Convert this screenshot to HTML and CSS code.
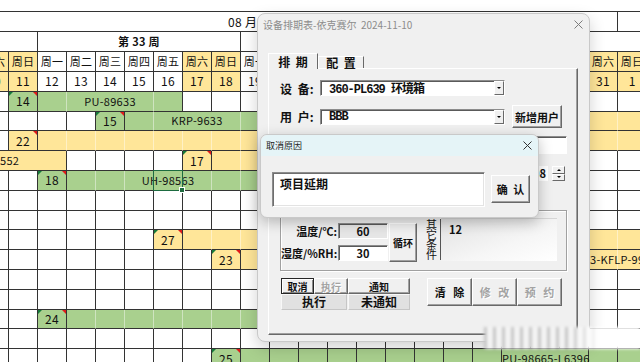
FILE: index.html
```html
<!DOCTYPE html>
<html lang="zh-CN">
<head>
    <meta charset="UTF-8">
    <meta name="viewport" content="width=device-width, initial-scale=1.0">
    <title>设备排期表</title>
    <link rel="stylesheet" href="styles.css">
</head>
<body>

    <table class="sheet">
        <colgroup><col span="23"></colgroup>
        <tr class="month-row"><td colspan="22" class="month">08 月</td><td></td></tr>
        <tr class="head-row"><td colspan="2"></td><td colspan="7" class="week">第 33 周</td><td colspan="7" class="week">第 34 周</td><td colspan="7" class="week">第 35 周</td></tr>
        <tr class="head-row days">
            <td class="we">周六</td><td class="we">周日</td><td>周一</td><td>周二</td><td>周三</td><td>周四</td><td>周五</td>
            <td class="we">周六</td><td class="we">周日</td><td>周一</td><td>周二</td><td>周三</td><td>周四</td><td>周五</td>
            <td class="we">周六</td><td class="we">周日</td><td>周一</td><td>周二</td><td>周三</td><td>周四</td><td>周五</td>
            <td class="we">周六</td><td class="we">周日</td>
        </tr>
        <tr class="dates">
            <td class="we">10</td><td class="we">11</td><td>12</td><td>13</td><td>14</td><td>15</td><td>16</td>
            <td class="we">17</td><td class="we">18</td><td>19</td><td>20</td><td>21</td><td>22</td><td>23</td>
            <td class="we">24</td><td class="we">25</td><td>26</td><td>27</td><td>28</td><td>29</td><td>30</td>
            <td class="we">31</td><td class="we">1</td>
        </tr>

        <!-- bookings -->
        <tr>
            <td></td><td class="g n">14</td><td class="g"></td><td class="g" colspan="3">PU-89633</td><td class="g e"></td><td></td><td></td>
            <td></td><td></td><td></td><td></td><td></td><td></td><td></td><td></td><td></td><td></td><td></td><td></td><td></td><td></td>
        </tr>
        <tr>
            <td></td><td></td><td></td><td></td><td class="g n">15</td><td class="g"></td><td class="g" colspan="3">KRP-9633</td><td class="g"></td><td class="g e"></td>
            <td></td><td></td><td></td><td></td><td></td><td></td><td class="y"></td><td class="y"></td><td class="y"></td><td class="y"></td><td class="y"></td><td class="y"></td>
        </tr>
        <tr>
            <td></td><td class="y n r">22</td><td class="y"></td><td class="y"></td><td class="y"></td><td class="y"></td><td class="y"></td><td class="y"></td><td class="y"></td>
            <td class="y"></td><td class="y"></td><td class="y"></td><td class="y"></td><td class="y"></td><td class="y"></td><td class="y"></td><td class="y"></td><td class="y"></td><td class="y"></td><td class="y"></td><td class="y"></td><td class="y"></td><td class="y"></td>
        </tr>
        <tr>
            <td class="y e tail" colspan="3">552</td><td></td><td></td><td></td><td></td><td class="y n">17</td><td class="y"></td><td class="y"></td><td class="y"></td><td class="y"></td><td class="y e"></td>
            <td></td><td></td><td></td><td></td><td></td><td></td><td></td><td></td><td></td><td></td>
        </tr>
        <tr>
            <td></td><td></td><td class="g n">18</td><td class="g"></td><td class="g"></td><td class="g"></td>
            <td class="g sel"><div class="spill">UH-98563</div><span class="cursor"></span></td>
            <td class="g"></td><td class="g"></td><td class="g"></td><td class="g"></td><td class="g e"></td>
            <td></td><td></td><td></td><td></td><td></td><td></td><td></td><td></td><td></td><td></td><td></td>
        </tr>
        <tr>
            <td></td><td></td><td></td><td></td><td></td><td></td><td></td><td></td><td></td><td></td><td></td><td></td>
            <td></td><td></td><td></td><td></td><td></td><td></td><td></td><td></td><td></td><td></td><td></td>
        </tr>
        <tr>
            <td></td><td></td><td></td><td></td><td></td><td></td><td></td><td></td><td></td><td></td><td></td><td></td>
            <td></td><td></td><td></td><td></td><td></td><td></td><td></td><td></td><td></td><td></td><td></td>
        </tr>
        <tr>
            <td></td><td></td><td></td><td></td><td></td><td></td><td class="y n">27</td><td class="y"></td><td class="y"></td><td class="y"></td><td class="y"></td><td class="y"></td>
            <td class="y"></td><td class="y"></td><td class="y"></td><td class="y"></td><td class="y"></td><td class="y"></td><td class="y"></td><td class="y"></td><td class="y"></td><td class="y"></td><td class="y"></td>
        </tr>
        <tr>
            <td></td><td></td><td></td><td></td><td></td><td></td><td></td><td></td><td class="y n">23</td><td class="y"></td><td class="y"></td><td class="y"></td>
            <td class="y"></td><td class="y"></td><td class="y"></td><td class="y"></td><td class="y"></td><td class="y"></td><td class="y"></td><td class="y"></td><td class="y"></td><td class="y cut">3-KFLP-9963</td><td class="y"></td>
        </tr>
        <tr>
            <td></td><td></td><td></td><td></td><td></td><td></td><td></td><td></td><td></td><td></td><td></td><td></td>
            <td></td><td></td><td></td><td></td><td></td><td></td><td></td><td></td><td></td><td></td><td></td>
        </tr>
        <tr>
            <td></td><td></td><td></td><td></td><td></td><td></td><td></td><td></td><td></td><td></td><td></td><td></td>
            <td></td><td></td><td></td><td></td><td></td><td></td><td></td><td></td><td></td><td></td><td></td>
        </tr>
        <tr>
            <td></td><td></td><td class="g n">24</td><td class="g"></td><td class="g"></td><td class="g"></td><td class="g"></td><td class="g"></td><td class="g"></td><td class="g"></td>
            <td class="g"></td><td class="g"></td><td class="g"></td><td class="g"></td><td class="g"></td><td class="g"></td><td class="g e"></td><td></td><td></td><td></td><td></td><td></td><td></td>
        </tr>
        <tr>
            <td></td><td></td><td></td><td></td><td></td><td></td><td></td><td></td><td></td><td></td><td></td><td></td>
            <td></td><td></td><td></td><td></td><td></td><td></td><td></td><td></td><td></td><td></td><td></td>
        </tr>
        <tr class="dark">
            <td></td><td></td><td></td><td></td><td></td><td></td><td></td><td></td><td class="g n">25</td>
            <td class="g"></td><td class="g"></td><td class="g"></td><td class="g"></td><td class="g"></td><td class="g"></td><td class="g"></td><td class="g"></td><td class="g"></td>
            <td class="g" colspan="3">PU-98665-L6396</td><td class="g"></td><td class="g"></td>
        </tr>
    </table>

    <!-- main form -->
    <div class="window main-win">
        <div class="titlebar">
            <span>设备排期表-依克赛尔&nbsp; 2024-11-10</span>
            <svg width="9" height="9" viewBox="0 0 9 9"><path d="M0.5 0.5L8.5 8.5M8.5 0.5L0.5 8.5" stroke="#7c7c7c" stroke-width="1"/></svg>
        </div>
        <div class="win-body">
            <div class="tabs">
                <div class="tab active">排 期</div>
                <div class="tab">配 置</div>
            </div>
            <div class="page">
                <div class="line">
                    <span class="lbl">设 备:</span>
                    <div class="combo"><span>360-PL639 环境箱</span><i class="drop"></i></div>
                </div>
                <div class="line l2">
                    <span class="lbl">用 户:</span>
                    <div class="combo"><span>BBB</span><i class="drop"></i></div>
                    <button class="btn add">新增用户</button>
                </div>
                <div class="line l3">
                    <span class="lbl">项 目:</span>
                    <div class="field wide"></div>
                </div>
                <div class="line l4">
                    <span class="lbl">时 间:</span>
                    <div class="field date">08</div>
                    <div class="spin"><i class="up"></i><i class="down"></i></div>
                </div>
                <div class="group">
                    <span class="glbl">温度/℃:</span>
                    <div class="field num grey">60</div>
                    <button class="btn cycle">循环</button>
                    <span class="vlbl">其它条件</span>
                    <div class="memo">12</div>
                    <span class="glbl">湿度/%RH:</span>
                    <div class="field num">30</div>
                </div>
                <div class="actions">
                    <div class="notify">
                        <button class="btn focus">取消</button>
                        <button class="btn" disabled>执行</button>
                        <button class="btn">通知</button>
                        <div class="state wide">执行</div>
                        <div class="state">未通知</div>
                    </div>
                    <div class="ops">
                        <button class="btn">清 除</button>
                        <button class="btn" disabled>修 改</button>
                        <button class="btn" disabled>预 约</button>
                    </div>
                </div>
            </div>
        </div>
    </div>

    <!-- cancel reason popup -->
    <div class="window cancel-win">
        <div class="titlebar">
            <span>取消原因</span>
            <svg width="9" height="9" viewBox="0 0 9 9"><path d="M0.5 0.5L8.5 8.5M8.5 0.5L0.5 8.5" stroke="#333" stroke-width="1"/></svg>
        </div>
        <div class="cancel-body">
            <div class="reason">项目延期</div>
            <button class="btn ok">确 认</button>
        </div>
    </div>

    <div class="smudge"></div>

</body>
</html>
```

FILE: styles.css
```css
* {
    box-sizing: border-box;
}

body {
    margin: 0;
    width: 640px;
    height: 362px;
    overflow: hidden;
    position: relative;
    background-color: #ffffff;
    color: #111111;
    font-family: "Noto Sans CJK SC", "Noto Sans", sans-serif;
}

/* ---------- sheet ---------- */

.sheet {
    border-collapse: separate;
    border-spacing: 0;
    table-layout: fixed;
    width: 667px;
    margin: 11px 0 0 -20px;
    font-size: 11px;
}

.sheet col {
    width: 29px;
}

.sheet tr {
    height: 19.8px;
}

.sheet td {
    padding: 0;
    border-right: 1px solid #333333;
    border-bottom: 1px solid #333333;
    text-align: center;
    white-space: nowrap;
    overflow: visible;
    line-height: 1;
    letter-spacing: 0.3px;
}

.sheet .month-row {
    height: 21px;
}

.sheet .month-row td {
    border-top: 1px solid #333333;
}

.sheet .head-row {
    height: 20px;
}

.month {
    text-align: left !important;
    padding-left: 248px !important;
    font-size: 12px;
}

.week {
    font-weight: bold;
}

.dates td {
    font-size: 12px;
}

.we {
    background-color: #ffe699;
}

.sheet td.g {
    background-color: #a9d08e;
    border-right-color: #cfe4c0;
}

.sheet td.y {
    background-color: #ffe699;
    border-right-color: #fff1c6;
}

.sheet td.e,
.sheet td.n,
.sheet .dark td {
    border-right-color: #333333;
}

.n {
    position: relative;
    font-size: 12px;
}

.n::before {
    content: "";
    position: absolute;
    left: 0;
    top: 0;
    border-top: 4px solid #167a3a;
    border-right: 4px solid transparent;
}

.n::after {
    content: "";
    position: absolute;
    right: 0;
    top: 0;
    border-top: 4px solid #e01a1a;
    border-left: 4px solid transparent;
}

.n.r::before {
    display: none;
}

.tail {
    text-align: left !important;
    padding-left: 20px !important;
}

.cut {
    text-align: left !important;
    padding-left: 1px !important;
}

.sel {
    position: relative;
}

.spill {
    display: flex;
    justify-content: center;
}

.cursor {
    position: absolute;
    left: -1px;
    top: -1px;
    right: -1px;
    bottom: -1px;
    border: 1px solid #1d6b40;
}

.cursor::after {
    content: "";
    position: absolute;
    right: -3px;
    bottom: -3px;
    width: 4px;
    height: 4px;
    background-color: #1d6b40;
    border: 1px solid #ffffff;
}

/* ---------- windows ---------- */

.window {
    position: absolute;
    background-color: #f0f0f0;
    border: 1px solid #c9c9c9;
    border-radius: 8px;
    box-shadow: 0 6px 16px rgba(0, 0, 0, 0.18);
}

.titlebar {
    height: 21px;
    display: flex;
    align-items: center;
    justify-content: space-between;
    font-size: 9px;
}

.titlebar svg {
    display: block;
}

.main-win {
    left: 257px;
    top: 13px;
    width: 333px;
    height: 329px;
}

.main-win .titlebar {
    padding: 0 6px 0 5px;
    font-size: 10px;
    color: #8c8c8c;
}

.win-body {
    padding: 18px 11px 0 10px;
}

.tabs {
    display: flex;
    align-items: flex-end;
    height: 15px;
    position: relative;
    z-index: 1;
}

.tab {
    width: 46px;
    height: 12px;
    display: flex;
    align-items: center;
    justify-content: center;
    font-size: 12px;
    font-weight: bold;
    word-spacing: 3px;
    border-left: 1px solid #ffffff;
    border-top: 1px solid #ffffff;
    border-right: 1px solid #696969;
}

.tab.active {
    width: 50px;
    height: 16px;
    margin-bottom: -1px;
    background-color: #f0f0f0;
}

.page {
    height: 267px;
    border: 1px solid;
    border-color: #ffffff #696969 #696969 #ffffff;
    box-shadow: inset -1px -1px #a0a0a0;
    padding: 11px 0 0 11px;
}

.line {
    display: flex;
    align-items: center;
    height: 16px;
}

.line.l2 {
    height: 23px;
    margin-top: 9px;
}

.line.l3 {
    height: 18px;
    margin-top: 8px;
}

.line.l4 {
    height: 15px;
    margin-top: 12px;
}

.lbl {
    width: 40px;
    font-size: 12px;
    font-weight: bold;
    word-spacing: 3px;
    white-space: nowrap;
}

.combo {
    width: 185px;
    height: 16px;
    display: flex;
    align-items: center;
    justify-content: space-between;
    background-color: #ffffff;
    border: 1px solid;
    border-color: #8c8c8c #ffffff #ffffff #8c8c8c;
    box-shadow: inset 1px 1px #5a5a5a;
    padding-left: 8px;
    font: bold 12px "Liberation Mono", "Noto Sans CJK SC", monospace;
    letter-spacing: -1px;
}

.drop {
    width: 10px;
    height: 14px;
    display: flex;
    align-items: center;
    justify-content: center;
    background-color: #f0f0f0;
    border: 1px solid;
    border-color: #ffffff #696969 #696969 #ffffff;
}

.drop::after {
    content: "";
    border-left: 2px solid transparent;
    border-right: 2px solid transparent;
    border-top: 2px solid #000000;
}

.btn {
    padding: 0;
    font-family: "Noto Sans CJK SC", sans-serif;
    font-size: 10px;
    font-weight: bold;
    color: #111111;
    background-color: #f0f0f0;
    border: 1px solid;
    border-color: #ffffff #696969 #696969 #ffffff;
    box-shadow: inset -1px -1px #a0a0a0;
    white-space: nowrap;
}

.btn:disabled {
    color: #a3a3a3;
    text-shadow: 1px 1px 0 #ffffff;
}

.btn.add {
    width: 50px;
    height: 23px;
    margin-left: 7px;
    font-size: 11px;
}

.field {
    height: 16px;
    background-color: #ffffff;
    border: 1px solid;
    border-color: #8c8c8c #ffffff #ffffff #8c8c8c;
    box-shadow: inset 1px 1px #5a5a5a;
    font-size: 11px;
    font-weight: bold;
}

.field.wide {
    width: 247px;
    height: 18px;
}

.field.date {
    width: 228px;
    height: 15px;
    border: none;
    box-shadow: none;
    text-align: right;
    padding-right: 2px;
    line-height: 15px;
}

.spin {
    width: 13px;
    height: 15px;
    margin-left: 4px;
    display: flex;
    flex-direction: column;
}

.spin i {
    flex: 1;
    display: flex;
    align-items: center;
    justify-content: center;
    border: 1px solid;
    border-color: #ffffff #696969 #696969 #ffffff;
}

.spin .up::after {
    content: "";
    border-left: 2px solid transparent;
    border-right: 2px solid transparent;
    border-bottom: 2px solid #000000;
}

.spin .down::after {
    content: "";
    border-left: 2px solid transparent;
    border-right: 2px solid transparent;
    border-top: 2px solid #000000;
}

/* group box */

.group {
    width: 287px;
    height: 61px;
    margin-top: 29px;
    padding-top: 12px;
    border: 1px solid #a0a0a0;
    box-shadow: inset 1px 1px #ffffff, 1px 1px #ffffff;
    display: grid;
    grid-template-columns: 57px 51px 36px 16px 116px;
    grid-template-rows: 16px 16px;
    row-gap: 6px;
}

.glbl {
    text-align: right;
    padding-right: 1px;
    font-size: 11px;
    font-weight: bold;
    line-height: 16px;
    white-space: nowrap;
}

.field.num {
    width: 50px;
    text-align: center;
    line-height: 14px;
}

.field.grey {
    background-color: #e6e6e6;
}

.btn.cycle {
    grid-row: span 2;
    width: 28px;
    height: 39px;
}

.vlbl {
    grid-row: span 2;
    margin-top: -4px;
    height: 41px;
    padding-right: 2px;
    font-size: 11px;
    line-height: 10px;
    word-break: break-all;
    text-align: center;
    border-right: 1px solid #555555;
}

.memo {
    grid-row: span 2;
    margin-top: -5px;
    height: 43px;
    padding: 2px 8px;
    font-size: 11px;
    font-weight: bold;
    background: linear-gradient(160deg, #e2e2e2 0%, #f6f6f6 60%, #ffffff 100%);
    border-top: 1px solid #d6d6d6;
}

/* buttons row */

.actions {
    display: flex;
    margin-top: 7px;
    padding-left: 1px;
}

.notify {
    display: grid;
    grid-template-columns: 33px 34px 62px;
    grid-template-rows: 16px 16px;
}

.btn.focus {
    border: 1px solid #262626;
    box-shadow: inset 1px 1px #ffffff, inset -1px -1px #8a8a8a;
}

.state {
    background-color: #e1e1e1;
    border: 1px solid;
    border-color: #f8f8f8 #c6c6c6 #c6c6c6 #f8f8f8;
    text-align: center;
    font-size: 12px;
    font-weight: bold;
    line-height: 14px;
}

.state.wide {
    grid-column: span 2;
    margin-right: 1px;
}

.ops {
    display: flex;
    margin-left: 17px;
}

.ops .btn {
    width: 45px;
    height: 28px;
    font-size: 11px;
    word-spacing: 5px;
}

/* cancel popup */

.cancel-win {
    left: 260px;
    top: 134px;
    width: 279px;
    height: 84px;
    border-radius: 7px;
    box-shadow: 0 4px 14px rgba(0, 0, 0, 0.25);
}

.cancel-win .titlebar {
    background-color: #e5f4f7;
    border-radius: 7px 7px 0 0;
    padding: 0 6px 0 5px;
    color: #222222;
}

.cancel-body {
    display: flex;
    align-items: flex-start;
    padding: 16px 0 0 11px;
}

.reason {
    width: 213px;
    height: 35px;
    background-color: #ffffff;
    border: 1px solid;
    border-color: #8c8c8c #ffffff #ffffff #8c8c8c;
    box-shadow: inset 1px 1px #6e6e6e, inset -1px -1px #e3e3e3;
    padding: 2px 7px;
    font-size: 12px;
    font-weight: bold;
}

.btn.ok {
    width: 39px;
    height: 28px;
    margin: 3px 0 0 6px;
    font-size: 11px;
    word-spacing: 3px;
}

.smudge {
    position: absolute;
    left: 484px;
    top: 327px;
    width: 156px;
    height: 22px;
    background:
        linear-gradient(90deg, rgba(255, 255, 255, 0) 0%, rgba(255, 255, 255, 0) 55%, #ffffff 75%),
        repeating-linear-gradient(90deg, rgba(110, 110, 110, 0.35) 0 3px, rgba(255, 255, 255, 0) 3px 9px),
        #f4f4f4;
    filter: blur(1.5px);
}
```
